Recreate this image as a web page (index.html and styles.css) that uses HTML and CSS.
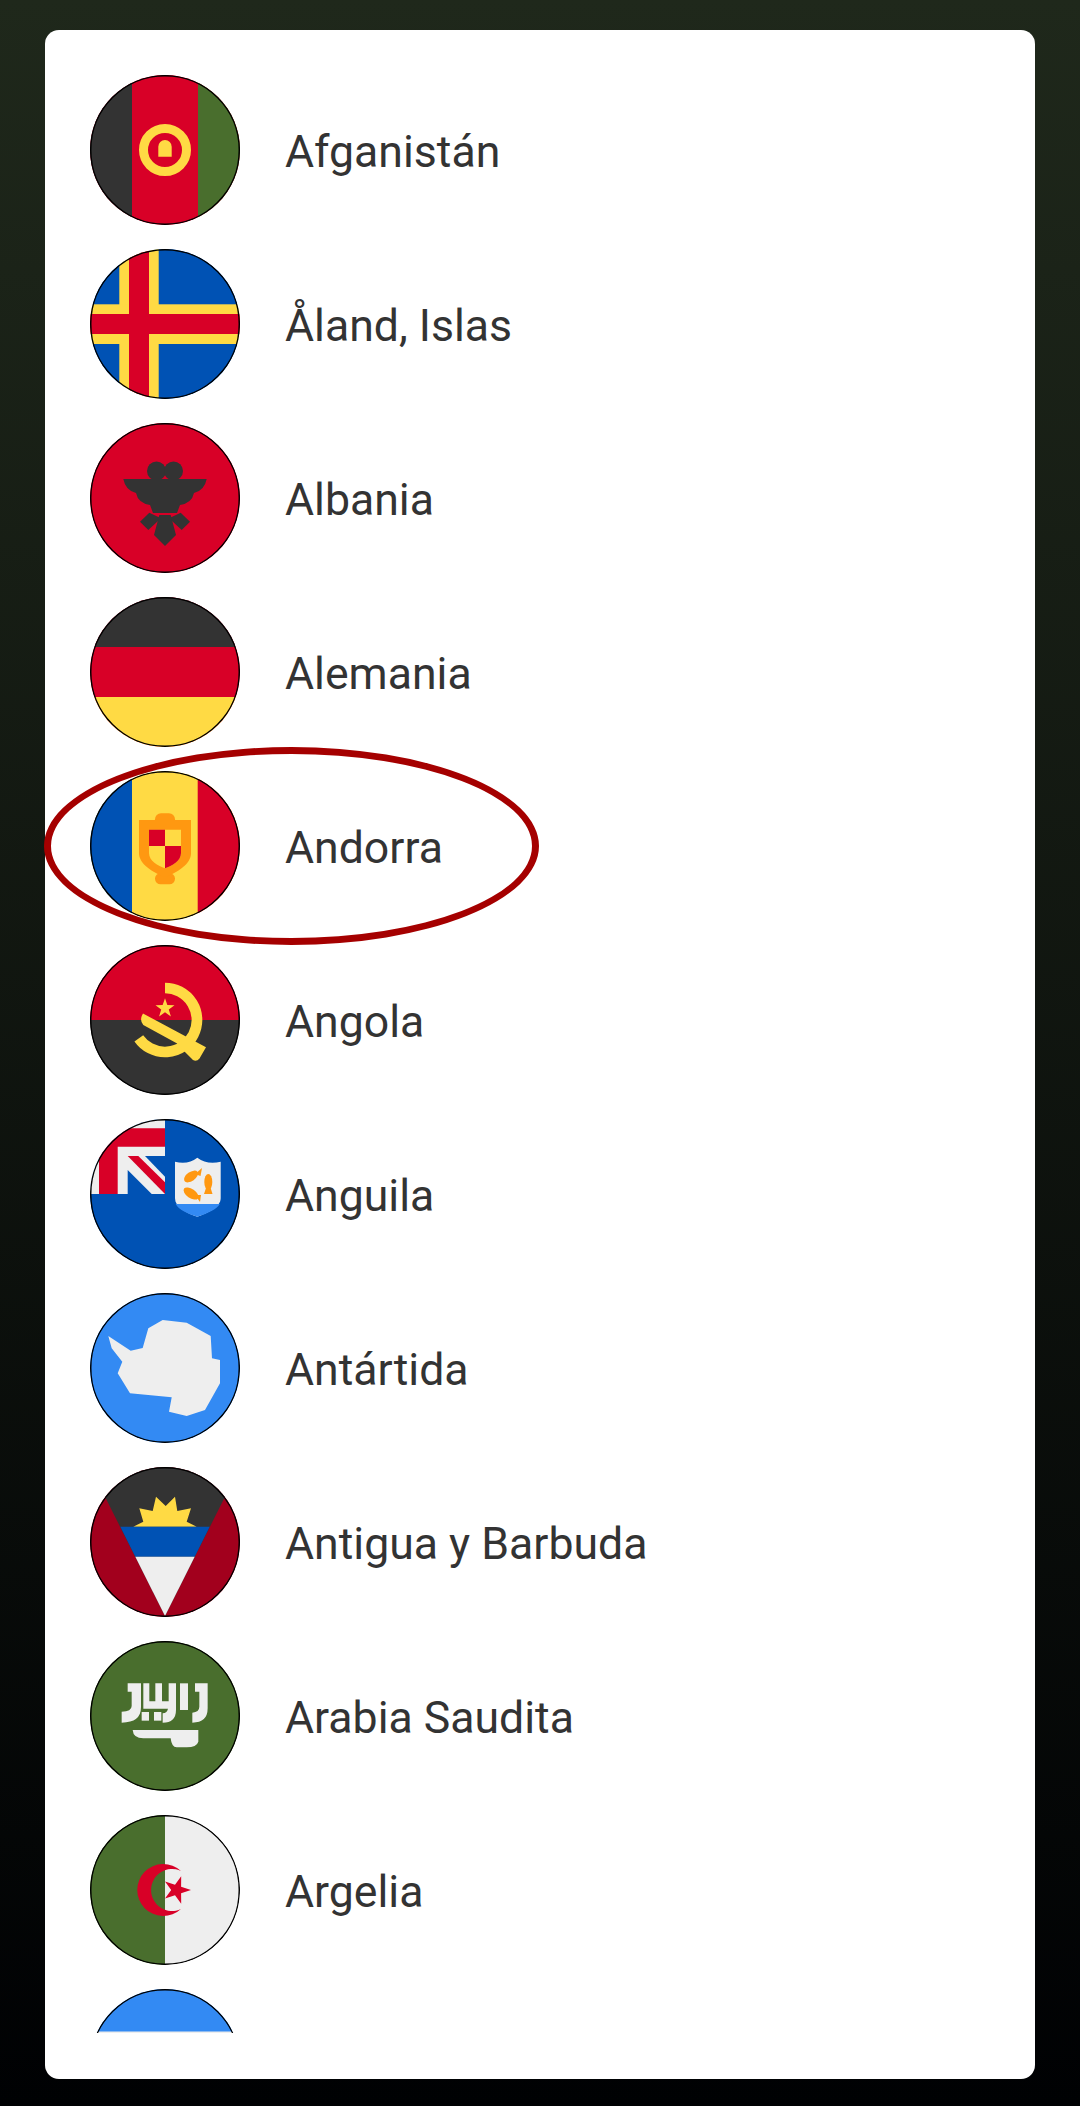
FILE: index.html
```html
<!DOCTYPE html>
<html lang="es">
<head>
    <meta charset="UTF-8">
    <meta name="viewport" content="width=device-width, initial-scale=1.0">
    <title>Seleccionar país</title>
    <link rel="stylesheet" href="styles.css">
</head>
<body>

    <div class="card">
        <ul class="country-list">

            <li class="country">
                <svg class="flag" viewBox="0 0 150 150">
                    <rect width="150" height="150" fill="#d80027"/>
                    <rect width="42" height="150" fill="#333333"/>
                    <rect x="108" width="42" height="150" fill="#496e2d"/>
                    <circle cx="75" cy="75" r="21.5" fill="none" stroke="#ffda44" stroke-width="9"/>
                    <path d="M68.3 81.7V71.7a6.7 6.7 0 0 1 13.4 0V81.7Z" fill="#ffda44"/>
                    <circle class="ring" cx="75" cy="75" r="74.3"/>
                </svg>
                <span class="name">Afganistán</span>
            </li>

            <li class="country">
                <svg class="flag" viewBox="0 0 150 150">
                    <rect width="150" height="150" fill="#0052b4"/>
                    <rect x="29.3" width="39.4" height="150" fill="#ffda44"/>
                    <rect y="55.3" width="150" height="39.7" fill="#ffda44"/>
                    <rect x="39" width="20" height="150" fill="#d80027"/>
                    <rect y="65" width="150" height="20" fill="#d80027"/>
                    <circle class="ring" cx="75" cy="75" r="74.3"/>
                </svg>
                <span class="name">Åland, Islas</span>
            </li>

            <li class="country">
                <svg class="flag" viewBox="0 0 150 150">
                    <rect width="150" height="150" fill="#d80027"/>
                    <circle cx="66.5" cy="48" r="9.5" fill="#333333"/>
                    <circle cx="83.5" cy="48" r="9.5" fill="#333333"/>
                    <path d="M33.3 56H116.7Q114.5 67.5 104 70Q102 80 90 82L87 90H63L60 82Q48 80 46 70Q35.5 67.5 33.3 56Z" fill="#333333"/>
                    <path d="M59.3 89.7L50 98.7L58.3 107L71 95.3Z" fill="#333333"/>
                    <path d="M90.7 89.7L100 98.7L91.7 107L79 95.3Z" fill="#333333"/>
                    <path d="M69.3 92L64 112L75 123L86 112L80.7 92Z" fill="#333333"/>
                    <circle class="ring" cx="75" cy="75" r="74.3"/>
                </svg>
                <span class="name">Albania</span>
            </li>

            <li class="country">
                <svg class="flag" viewBox="0 0 150 150">
                    <rect width="150" height="150" fill="#d80027"/>
                    <rect width="150" height="50" fill="#333333"/>
                    <rect y="100" width="150" height="50" fill="#ffda44"/>
                    <circle class="ring" cx="75" cy="75" r="74.3"/>
                </svg>
                <span class="name">Alemania</span>
            </li>

            <li class="country">
                <svg class="flag" viewBox="0 0 150 150">
                    <rect width="150" height="150" fill="#ffda44"/>
                    <rect width="42" height="150" fill="#0052b4"/>
                    <rect x="107.7" width="42.3" height="150" fill="#d80027"/>
                    <rect x="65" y="42.3" width="20" height="12" rx="6" fill="#ff9811"/>
                    <rect x="65" y="102" width="20" height="11.3" rx="5.6" fill="#ff9811"/>
                    <path d="M49 49H101V82.3C101 93 87 102 75 106C63 102 49 93 49 82.3Z" fill="#ff9811"/>
                    <path d="M59 58.7H91V82C91 90 82 95 75 97.3C68 95 59 90 59 82Z" fill="#ffda44"/>
                    <rect x="59" y="58.7" width="16" height="16.3" fill="#d80027"/>
                    <path d="M75 75H91V82C91 90 82 95 75 97.3Z" fill="#d80027"/>
                    <circle class="ring" cx="75" cy="75" r="74.3"/>
                </svg>
                <span class="name">Andorra</span>
                <div class="highlight"></div>
            </li>

            <li class="country">
                <svg class="flag" viewBox="0 0 150 150">
                    <rect width="150" height="75" fill="#d80027"/>
                    <rect y="75" width="150" height="75" fill="#333333"/>
                    <path d="M75 43A32 32 0 1 1 48.8 93.4" fill="none" stroke="#ffda44" stroke-width="10.7"/>
                    <path d="M53 68.5L116 102.3L109.5 113.5Q106.5 117 103 115L93 105L86.7 98.3L53.3 80Q49 75 53 68.5Z" fill="#ffda44"/>
                    <polygon points="75,53.3 77.35,60.06 84.5,60.2 78.8,64.5 80.9,71.4 75,67.3 69.1,71.4 71.2,64.5 65.5,60.2 72.65,60.06" fill="#ffda44"/>
                    <circle class="ring" cx="75" cy="75" r="74.3"/>
                </svg>
                <span class="name">Angola</span>
            </li>

            <li class="country">
                <svg class="flag" viewBox="0 0 150 150">
                    <rect width="150" height="150" fill="#0052b4"/>
                    <rect width="75" height="75" fill="#eeeeee"/>
                    <path d="M9 75V9.3H75V27.7H27.7V75Z" fill="#d80027"/>
                    <polygon points="37.7,51 37.7,75 61.7,75" fill="#0052b4"/>
                    <polygon points="55,37 75,37 75,57.7" fill="#0052b4"/>
                    <polygon points="37.7,37 48.3,37 75,63.3 75,75" fill="#d80027"/>
                    <path d="M85 42.7Q98 46 107.3 38.7Q117 46 130.7 42.7V79.3C130.7 88 118 94 107.3 97.7C96 94 85 88 85 79.3Z" fill="#eeeeee"/>
                    <path d="M85.7 85H129.8C126 91 116 95 107.3 97.7C98 95 89 91 85.7 85Z" fill="#338af3"/>
                    <ellipse cx="101" cy="57.5" rx="8" ry="4.5" transform="rotate(-35 101 57.5)" fill="#ff9811"/>
                    <polygon points="105,55 112,49 110.5,57" fill="#ff9811"/>
                    <ellipse cx="118.3" cy="63" rx="4" ry="8" fill="#ff9811"/>
                    <polygon points="116,69 120.6,69 122.5,75 114,75" fill="#ff9811"/>
                    <ellipse cx="101" cy="74.5" rx="8.5" ry="4.5" transform="rotate(35 101 74.5)" fill="#ff9811"/>
                    <polygon points="105,76 111,76 110,83" fill="#ff9811"/>
                    <circle class="ring" cx="75" cy="75" r="74.3"/>
                </svg>
                <span class="name">Anguila</span>
            </li>

            <li class="country">
                <svg class="flag" viewBox="0 0 150 150">
                    <rect width="150" height="150" fill="#338af3"/>
                    <polygon points="18.3,43 40.7,57.7 52.7,55 58.3,35.3 72.7,27 96.7,29.7 120.7,43 122,65.3 130,67 130,90.3 115,117 96.7,123 79,118.7 81.7,104.3 40,100.3 27.7,80.3 32.3,68.7 21.7,55.3" fill="#eeeeee"/>
                    <circle class="ring" cx="75" cy="75" r="74.3"/>
                </svg>
                <span class="name">Antártida</span>
            </li>

            <li class="country">
                <svg class="flag" viewBox="0 0 150 150">
                    <rect width="150" height="150" fill="#a2001d"/>
                    <polygon points="75,149 0,0 150,0" fill="#333333"/>
                    <polygon points="43.3,59.7 53.3,54.7 49.3,41.3 62.7,44 66,29.7 75.7,39 85,29.7 87.3,44 101,41.3 96.7,54.7 106.7,59.7" fill="#ffda44"/>
                    <polygon points="30.3,59.7 119.7,59.7 104.7,89.7 45.3,89.7" fill="#0052b4"/>
                    <polygon points="45.3,89.7 104.7,89.7 75,149" fill="#eeeeee"/>
                    <circle class="ring" cx="75" cy="75" r="74.3"/>
                </svg>
                <span class="name">Antigua y Barbuda</span>
            </li>

            <li class="country">
                <svg class="flag" viewBox="0 0 150 150">
                    <rect width="150" height="150" fill="#496e2d"/>
                    <g transform="translate(-10 -11) scale(.3333)" fill="#eeeeee">
                        <path d="M143 160H183V232Q183 278 125 278V245Q155 245 155 228V185H143Z"/>
                        <path d="M190 160H208V214H226V160H246V214H266V160H288V240Q288 278 248 278V250Q262 248 264 236H190Z"/>
                        <rect x="185" y="246" width="22" height="26"/>
                        <rect x="222" y="246" width="22" height="26"/>
                        <rect x="300" y="160" width="24" height="80"/>
                        <path d="M345 160H383V235Q383 278 337 278V248Q358 246 358 230V185H345Z"/>
                        <path d="M158 300H355V335Q350 352 320 352H290Q275 352 272 325H190Q160 325 158 300Z"/>
                    </g>
                    <circle class="ring" cx="75" cy="75" r="74.3"/>
                </svg>
                <span class="name">Arabia Saudita</span>
            </li>

            <li class="country">
                <svg class="flag" viewBox="0 0 150 150">
                    <rect width="75" height="150" fill="#496e2d"/>
                    <rect x="75" width="75" height="150" fill="#eeeeee"/>
                    <path d="M91 56A26 26 0 1 0 91 94A21 21 0 1 1 91 56Z" fill="#d80027"/>
                    <polygon points="101,75 91.1,78.2 91.2,88.8 85,80.2 75,83.5 81.2,75 75,66.5 85,69.8 91.2,61.2 91.1,71.8" fill="#d80027"/>
                    <circle class="ring" cx="75" cy="75" r="74.3"/>
                </svg>
                <span class="name">Argelia</span>
            </li>

            <!-- next row is cut off by the list, only the top of its flag shows -->
            <li class="country">
                <svg class="flag" viewBox="0 0 150 150">
                    <rect width="150" height="150" fill="#eeeeee"/>
                    <rect width="150" height="42.5" fill="#338af3"/>
                    <circle class="ring" cx="75" cy="75" r="74.3"/>
                </svg>
            </li>

        </ul>
    </div>

</body>
</html>
```

FILE: styles.css
```css
body {
    margin: 0;
    padding: 30px 45px 27px;
    height: 2106px;
    box-sizing: border-box;
    background: linear-gradient(180deg, #1f281b 0%, #000103 100%);
    font-family: Roboto, "Liberation Sans", sans-serif;
}

.card {
    height: 100%;
    box-sizing: border-box;
    padding: 45px 45px 46px;
    background-color: #ffffff;
    border-radius: 14px;
}

.country-list {
    height: 100%;
    /* the ellipse pokes out of the list on the left */
    margin: 0 0 0 -46px;
    padding: 0 0 0 46px;
    list-style: none;
    overflow: hidden;
}

.country {
    position: relative;
    display: flex;
    align-items: center;
    height: 150px;
    margin-bottom: 24px;
}

.flag {
    display: block;
    flex: none;
    width: 150px;
    height: 150px;
    border-radius: 50%;
}

.ring {
    fill: none;
    stroke: #000000;
    stroke-width: 1.5;
}

.name {
    margin-left: 45px;
    padding-top: 3px;
    font-size: 44.6px;
    color: #333333;
}

.highlight {
    position: absolute;
    left: -46px;
    top: -24px;
    width: 495px;
    height: 198px;
    box-sizing: border-box;
    border: 7px solid #a50000;
    border-radius: 50%;
}
```
